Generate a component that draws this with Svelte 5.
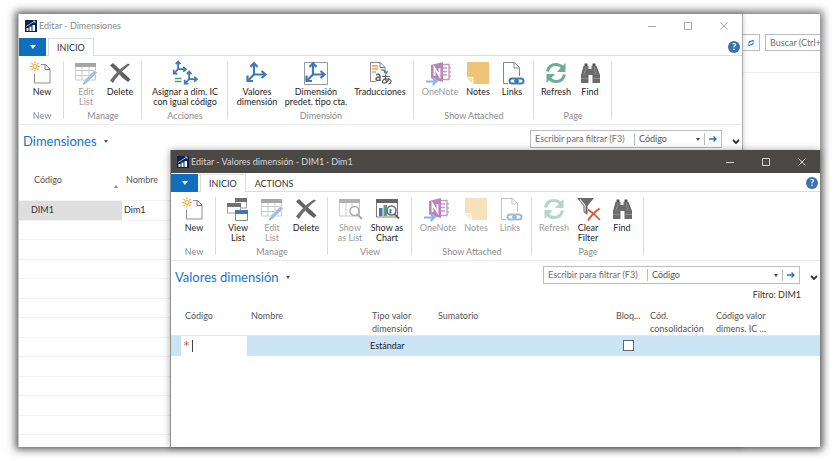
<script>
  const mainGroups = [
    { name: 'New', items: [{ icon: 'new', lines: ['New'] }] },
    { name: 'Manage', items: [{ icon: 'edit', lines: ['Edit', 'List'], off: true }, { icon: 'delete', lines: ['Delete'] }] },
    { name: 'Acciones', items: [{ icon: 'assign', lines: ['Asignar a dim. IC', 'con igual código'], size: 'xxl' }] },
    {
      name: 'Dimensión',
      items: [
        { icon: 'axes', lines: ['Valores', 'dimensión'], size: 'l' },
        { icon: 'axesbox', lines: ['Dimensión', 'predet. tipo cta.'], size: 'xl' },
        { icon: 'translate', lines: ['Traducciones'], size: 'll' }
      ]
    },
    {
      name: 'Show Attached',
      items: [
        { icon: 'onenote', lines: ['OneNote'], size: 'mm', off: true },
        { icon: 'notes', lines: ['Notes'] },
        { icon: 'links', lines: ['Links'] }
      ]
    },
    { name: 'Page', items: [{ icon: 'refresh', lines: ['Refresh'] }, { icon: 'find', lines: ['Find'] }] }
  ];

  const valueGroups = [
    { name: 'New', items: [{ icon: 'new', lines: ['New'] }] },
    {
      name: 'Manage',
      items: [
        { icon: 'view', lines: ['View', 'List'] },
        { icon: 'edit', lines: ['Edit', 'List'], off: true },
        { icon: 'delete', lines: ['Delete'] }
      ]
    },
    {
      name: 'View',
      items: [
        { icon: 'showlist', lines: ['Show', 'as List'], off: true },
        { icon: 'showchart', lines: ['Show as', 'Chart'], size: 'm' }
      ]
    },
    {
      name: 'Show Attached',
      items: [
        { icon: 'onenote', lines: ['OneNote'], size: 'mm', off: true },
        { icon: 'notes', lines: ['Notes'], off: true, faded: true },
        { icon: 'links', lines: ['Links'], off: true, faded: true }
      ]
    },
    {
      name: 'Page',
      items: [
        { icon: 'refresh', lines: ['Refresh'], off: true, faded: true },
        { icon: 'clear', lines: ['Clear', 'Filter'] },
        { icon: 'find', lines: ['Find'] }
      ]
    }
  ];

  const emptyRows = Array.from({ length: 12 });
</script>

{#snippet axes()}
  <path d="M9 3v10.500h10M9 13.500L3 19.500" />
  <path d="M5.500 6L9 2.200L12.500 6M16.500 10L20.500 13.500L16.500 17M2.500 14.500V20H8" />
{/snippet}

{#snippet glyph(kind)}
  <svg class="glyph" viewBox="0 0 24 24" aria-hidden="true">
    {#if kind === 'new'}
      <path d="M11 3.500h4.500l4.500 4.500v14H4.500V13" fill="#fff" stroke="#8e8e8e" />
      <path d="M15 3.500V8.500H20" fill="none" stroke="#777" />
      <g stroke="#e9a93a" stroke-width="1.200" fill="none">
        <circle cx="5" cy="5.500" r="2" />
        <path d="M5 .5v2M5 8.500v2M0 5.500h2M8 5.500h2M1.500 2l1.300 1.300M7.300 7.800L8.600 9M8.600 2L7.300 3.300M1.500 9l1.300-1.200" />
      </g>
    {:else if kind === 'edit'}
      <path d="M1.500 4h20v15h-20zM1.500 9.500h20M1.500 14.500h20M8 4v15M15 4v15" fill="#fff" stroke="#c9c9c9" />
      <path d="M1 2h21v4H1z" fill="#a6a6a6" />
      <path d="M20.500 9l3 2.500L13 22l-4 1.500L10.500 19z" fill="#9fc0e4" stroke="#fff" stroke-width=".6" />
      <path d="M9 23.500l1-2.500 1.500 1.500z" fill="#7f9fc4" />
    {:else if kind === 'delete'}
      <path d="M2 4.500L5 2Q12 9 18 14q3 3 4.500 4.500L20 21Q14 17 10 12 6 8 2 4.500z" fill="#616161" />
      <path d="M20 2.500l2 1Q14 10 10 15q-3 3-5 7L2 19.500Q6 14 11 9q5-4 9-6.500z" fill="#6d6d6d" />
    {:else if kind === 'assign'}
      <g fill="none" stroke="#3f78b5" stroke-width="2.600">
        <g transform="translate(-1 -1) scale(.68)">{@render axes()}</g>
        <g transform="translate(10 9) scale(.68)">{@render axes()}</g>
      </g>
      <path d="M2 17.500h6.500M2 20.500h6.500" stroke="#4d9a7c" stroke-width="1.300" />
    {:else if kind === 'axes'}
      <g fill="none" stroke="#3f78b5" stroke-width="2.200">{@render axes()}</g>
    {:else if kind === 'axesbox'}
      <path d="M.5 1.500h23v22H.5z" fill="#fff" stroke="#9b9b9b" />
      <g fill="none" stroke="#3f78b5" stroke-width="2.200">{@render axes()}</g>
    {:else if kind === 'translate'}
      <path d="M2.500 1.500h10l4.500 5v4M2.500 1.500v19h6" fill="none" stroke="#8d8d8d" />
      <path d="M12 1.500v5h5" fill="none" stroke="#777" />
      <path d="M4 5h6M4 8h6M4 11h4" stroke="#f09a55" stroke-width="1.300" />
      <path d="M13 9q4-1 5 3M16 10.500l2 2 1.500-2.500" fill="none" stroke="#3f78b5" stroke-width="1.200" />
      <path d="M8 14q3-2 4 1v5M12 16q-4 0-4 2t4 1" fill="none" stroke="#5a5a5a" stroke-width="1.400" />
      <path d="M14 15.500h8M17.500 13.500q-.5 5 1 8M21 17q-1 4-4 5-3 .5-2.500-2 1-2.500 5-2 4 .500 3.500 3-.5 1.500-2.500 2" fill="none" stroke="#5a5a5a" stroke-width="1.200" />
    {:else if kind === 'onenote'}
      <path d="M14 3.500h7v15h-7" fill="none" stroke="#c59ac4" stroke-width="1.400" />
      <path d="M15 7h4M15 10.500h4M15 14h4M21 7h2M21 11h2M21 15h2" stroke="#c59ac4" stroke-width="1.500" />
      <path d="M3 4l12-3v20L3 18z" fill="#b985b8" />
      <path d="M6.500 15V7l5 8V7" fill="none" stroke="#fff" stroke-width="1.800" />
      <path d="M-1 17.500h8l2 2v4.500h-10z" fill="#fff" />
      <path d="M-2 20.500H8M4.500 17l4 3.500-4 3.500" fill="none" stroke="#8db4de" stroke-width="2" />
    {:else if kind === 'notes'}
      <path d="M1 1h22v22H7l-6-6z" fill="#eec578" />
      <path d="M1 16.500h6V23" fill="#f8dfae" stroke="#fff" />
    {:else if kind === 'links'}
      <path d="M8 22.500H3.500v-21h11l5 5V15M14 1.500v5.500h5.500" fill="none" stroke="#858585" />
      <g fill="none" stroke="#3f78b5" stroke-width="2">
        <rect x="9.500" y="17.500" width="8" height="5" rx="2.500" />
        <rect x="15.500" y="17.500" width="8" height="5" rx="2.500" />
      </g>
      <path d="M14 20h5" stroke="#3f78b5" stroke-width="1.500" />
    {:else if kind === 'refresh'}
      <path d="M3.500 10.500Q5 3.500 12 3.500q4 0 6.500 3M20.500 13.500Q19 20.500 12 20.500q-4 0-6.500-3" fill="none" stroke="#6faa93" stroke-width="3" />
      <path d="M21.500 2v9h-8.500zM2.500 22v-9h8.500z" fill="#6faa93" />
    {:else if kind === 'find'}
      <path d="M5.500 5h5v3h3V5h5l3.500 9v8h-7.500v-8h-4v8H3v-8z" fill="#6b6b6b" />
      <path d="M6.500 2.500h3V5h-3zM14.500 2.500h3V5h-3z" fill="#555" />
      <path d="M3 17.500h7.500M14.500 17.500H22M8 6l-2 8M16 6l2 8" stroke="#999" stroke-width=".8" />
    {:else if kind === 'view'}
      <path d="M9.500 3h11v8h-11z" fill="#fff" stroke="#a0a0a0" />
      <path d="M9 1h12v4H9z" fill="#707070" />
      <path d="M1.500 8h13v8h-13z" fill="#fff" stroke="#a0a0a0" />
      <path d="M1 6h14v4H1z" fill="#707070" />
      <path d="M9.500 15h12v8.500h-12z" fill="#fff" stroke="#8a8a8a" />
      <path d="M9 13h13v4H9z" fill="#3f78b5" />
    {:else if kind === 'showlist'}
      <path d="M1.500 3h20v16h-20zM8 3v16M14 3v16" fill="#fff" stroke="#c9c9c9" />
      <path d="M1 2h21v4H1z" fill="#b0b0b0" />
      <circle cx="16.500" cy="14" r="4.500" fill="#fff" stroke="#aaa" stroke-width="1.500" />
      <path d="M19.500 17.500L24 22" stroke="#aaa" stroke-width="2" />
    {:else if kind === 'showchart'}
      <path d="M1.500 3h21v17h-21z" fill="#fff" stroke="#7a7a7a" />
      <path d="M1 2h22v4H1z" fill="#646464" />
      <path d="M4 11h3.500v8H4z" fill="#3f78b5" />
      <path d="M8.500 8H12v11H8.500z" fill="#58a186" />
      <circle cx="16.500" cy="13.500" r="4.500" fill="#fff" stroke="#666" stroke-width="1.500" />
      <path d="M14.500 12h2v4.500h-2z" fill="#3f78b5" />
      <path d="M19.500 17L24 21.500" stroke="#666" stroke-width="2" />
    {:else if kind === 'clear'}
      <path d="M1 1h17l-6.500 8v9l-4-3V9z" fill="#6b6b6b" />
      <path d="M4 2.500l5 6v6" fill="none" stroke="#ddd" stroke-width="1.200" />
      <path d="M12 12.500q6 4 12 10.500M23.500 11.500Q16 17 12 23.500" fill="none" stroke="#dc5430" stroke-width="1.800" />
    {/if}
  </svg>
{/snippet}

{#snippet titlebar(text)}
  <header class="titlebar">
    <svg class="logo" viewBox="0 0 12 12" aria-hidden="true">
      <path d="M0 0h12v12H0z" fill="#0c2350" />
      <path d="M1.500 8h2v3h-2zM4.500 6.500h2V11h-2zM7.500 5h2.500v6H7.500z" fill="#fff" />
      <path d="M1 6.500L5 4l5-3M8 1h2v2" fill="none" stroke="#c8d4e6" stroke-width=".8" />
    </svg>
    <h1>{text}</h1>
    <div class="winbuttons">
      <button aria-label="Minimizar"><svg viewBox="0 0 10 10"><path d="M1 5.500h8" /></svg></button>
      <button aria-label="Maximizar"><svg viewBox="0 0 10 10"><path d="M1.500 1.500h7v7h-7z" /></svg></button>
      <button aria-label="Cerrar"><svg viewBox="0 0 10 10"><path d="M1.500 1.500l7 7M8.500 1.500l-7 7" /></svg></button>
    </div>
  </header>
{/snippet}

{#snippet tabs(names)}
  <nav class="tabs">
    <button class="menu" aria-label="Menú"><svg viewBox="0 0 6 4"><path d="M0 0h6L3 4z" fill="#fff" /></svg></button>
    {#each names as name, i}
      <button class="tab" class:active={i === 0}>{name}</button>
    {/each}
    <button class="help" aria-label="Ayuda">?</button>
  </nav>
{/snippet}

{#snippet ribbon(groups)}
  <div class="ribbon">
    {#each groups as group}
      <section class="group">
        <div class="items">
          {#each group.items as item}
            <button class="item {item.size ?? 's'}" class:off={item.off} class:faded={item.faded}>
              {@render glyph(item.icon)}
              {#each item.lines as line}<span>{line}</span>{/each}
            </button>
          {/each}
        </div>
        <h3>{group.name}</h3>
      </section>
    {/each}
  </div>
{/snippet}

{#snippet pagehead(title, id)}
  <div class="pagehead">
    <h2>{title}<svg class="tiny" viewBox="0 0 4 3"><path d="M0 0h4L2 3z" fill="#555" /></svg></h2>
    <div class="filter">
      <input type="text" aria-label="Filtrar" placeholder="Escribir para filtrar (F3)" />
      <label for={id} class="pick">
        <select {id} aria-label="Campo"><option>Código</option></select>
        <svg class="tiny" viewBox="0 0 4 3"><path d="M0 0h4L2 3z" fill="#444" /></svg>
      </label>
      <button class="go" aria-label="Aplicar">
        <svg viewBox="0 0 8 8"><path d="M0 4h7M4.500 1.500L7 4 4.500 6.500" fill="none" stroke="#2a6fc0" stroke-width="1.300" /></svg>
      </button>
    </div>
    <button class="expand" aria-label="Expandir">
      <svg viewBox="0 0 8 6"><path d="M1 1l3 3 3-3" fill="none" stroke="#333" stroke-width="1.800" /></svg>
    </button>
  </div>
{/snippet}

<main class="desktop">
  <div class="backdrop">
    <div class="searchbar">
      <button class="reload" aria-label="Actualizar">
        <svg viewBox="0 0 8 8"><path d="M1 4.500Q1.500 1.500 5 1.500M7 3.500Q6.500 6.500 3 6.500" fill="none" stroke="#2a6fc0" stroke-width="1.400" /><path d="M4.500 0H7.500v3.500zM3.500 8H.5V4.500z" fill="#2a6fc0" /></svg>
      </button>
      <input type="text" aria-label="Buscar" placeholder="Buscar (Ctrl+" />
    </div>
  </div>

  <article class="window main">
    {@render titlebar('Editar - Dimensiones')}
    {@render tabs(['INICIO'])}
    {@render ribbon(mainGroups)}
    {@render pagehead('Dimensiones', 'field-main')}
    <table class="list">
      <colgroup><col class="code" /><col /></colgroup>
      <thead>
        <tr>
          <th>Código<svg class="sort" viewBox="0 0 4 3"><path d="M0 3h4L2 0z" fill="#888" /></svg></th>
          <th>Nombre</th>
        </tr>
      </thead>
      <tbody>
        <tr><td class="selected">DIM1</td><td>Dim1</td></tr>
        {#each emptyRows as _}
          <tr><td></td><td></td></tr>
        {/each}
      </tbody>
    </table>
  </article>

  <article class="window values">
    {@render titlebar('Editar - Valores dimensión - DIM1 · Dim1')}
    {@render tabs(['INICIO', 'ACTIONS'])}
    {@render ribbon(valueGroups)}
    {@render pagehead('Valores dimensión', 'field-values')}
    <p class="applied">Filtro: DIM1</p>
    <table class="grid">
      <colgroup>
        <col class="mark" /><col class="short" /><col class="name" /><col class="short" />
        <col class="sum" /><col class="tick" /><col class="short" /><col />
      </colgroup>
      <thead>
        <tr>
          <td></td>
          <th>Código</th>
          <th>Nombre</th>
          <th>Tipo valor<br />dimensión</th>
          <th>Sumatorio</th>
          <th>Bloq...</th>
          <th>Cód.<br />consolidación</th>
          <th>Código valor<br />dimens. IC ...</th>
        </tr>
      </thead>
      <tbody>
        <tr>
          <td></td>
          <td class="editing"><div><span class="star">*</span><input type="text" aria-label="Código" /></div></td>
          <td></td>
          <td>Estándar</td>
          <td></td>
          <td class="check"><input type="checkbox" aria-label="Bloqueado" /></td>
          <td></td>
          <td></td>
        </tr>
      </tbody>
    </table>
  </article>
</main>

<style>
  :global(body) {
    background: #fff;
  }
  :global(#app) {
    overflow: hidden;
  }
  .desktop {
    position: relative;
    height: calc(100vh - 28px);
    margin: 14px 18px;
    background: #fff;
    font: 9px/10px Lato, 'Open Sans', sans-serif;
    color: #333;
    box-shadow: 0 0 8px 3px rgba(0, 0, 0, 0.55);
  }
  h1, h2, h3, p {
    margin: 0;
    font-weight: 400;
  }
  button, input, select {
    margin: 0;
    padding: 0;
    border: 0;
    border-radius: 0;
    background: none;
    font: inherit;
    color: inherit;
    outline: 0;
  }
  svg {
    display: block;
    flex: none;
  }
  ::placeholder {
    color: #6e6e6e;
    opacity: 1;
  }

  .backdrop {
    height: 58px;
    border-bottom: 1px solid #eee;
  }
  .searchbar {
    display: flex;
    justify-content: flex-end;
    gap: 5px;
    padding-top: 20px;
  }
  .reload {
    display: flex;
    align-items: center;
    justify-content: center;
    width: 18px;
    height: 17px;
    border: 1px solid #bbb;
  }
  .reload svg {
    width: 6px;
    height: 6px;
  }
  .searchbar input {
    box-sizing: border-box;
    width: 55px;
    padding-left: 4px;
    border: 1px solid #bbb;
    border-right: 0;
  }

  .window {
    position: absolute;
    display: flex;
    flex-direction: column;
    bottom: 0;
    background: #fff;
    overflow: clip;
  }
  .window > :global(*) {
    flex-shrink: 0;
  }
  .main {
    top: 0;
    left: 0;
    right: 77px;
    border-left: 1px solid #c4c4c4;
    border-right: 1px solid #aaa;
    box-shadow: 0 0 6px rgba(0, 0, 0, 0.2);
  }
  .values {
    top: 136px;
    left: 152px;
    right: 0;
    border-left: 1px solid #8f8f8f;
    box-shadow: 0 0 7px rgba(0, 0, 0, 0.35);
  }

  .titlebar {
    display: flex;
    align-items: center;
    gap: 2px;
    height: 24px;
    padding: 0 0 0 6px;
    color: #8a8a8a;
  }
  .values .titlebar {
    height: 23px;
    margin-bottom: 1px;
    background: #4a4946;
    color: #d6d6d6;
  }
  .logo {
    width: 12px;
    height: 12px;
  }
  h1 {
    flex: 1;
    font-size: 9px;
    white-space: nowrap;
  }
  .winbuttons {
    display: flex;
  }
  .main .winbuttons {
    color: #a6a6a6;
  }
  .winbuttons button {
    display: flex;
    justify-content: center;
    width: 36px;
  }
  .winbuttons svg {
    width: 10px;
    height: 10px;
    fill: none;
    stroke: currentColor;
  }

  .tabs {
    display: flex;
    box-sizing: border-box;
    height: 18px;
    border-bottom: 1px solid #dcdcdc;
  }
  .menu {
    display: flex;
    align-items: center;
    justify-content: center;
    width: 27px;
    height: 18px;
    margin-right: 2px;
    background: #106ebe;
  }
  .menu svg {
    width: 6px;
    height: 4px;
  }
  .tab {
    box-sizing: border-box;
    height: 18px;
    padding: 0 8px;
    border: 1px solid transparent;
    border-bottom: 0;
  }
  .tab.active {
    border-color: #dcdcdc;
    background: #fff;
  }
  .help {
    width: 12px;
    height: 12px;
    margin: 3px 2px 0 auto;
    border-radius: 6px;
    background: #3a72b0;
    color: #fff;
    font-weight: 700;
  }

  .ribbon {
    display: flex;
    padding: 5px 0 5px 1px;
    border-bottom: 1px solid #ececec;
  }
  .group {
    display: flex;
    flex-direction: column;
    justify-content: space-between;
    box-sizing: border-box;
    height: 58px;
    padding: 0 4px 0 5px;
    border-right: 1px solid #dedede;
  }
  .items {
    display: flex;
    align-items: flex-start;
  }
  h3 {
    font-size: 9px;
    line-height: 6px;
    text-align: center;
    color: #8c8c8c;
  }
  .item {
    display: flex;
    flex-direction: column;
    align-items: center;
    color: #1e1e1e;
    white-space: nowrap;
  }
  .glyph {
    width: 24px;
    height: 24px;
    margin-bottom: 2px;
    overflow: visible;
  }
  .s { width: 34px; }
  .m { width: 40px; }
  .mm { width: 42px; }
  .l { width: 48px; }
  .ll { width: 58px; }
  .xl { width: 70px; }
  .xxl { width: 76px; }
  .off {
    color: #9c9c9c;
  }
  .faded .glyph {
    opacity: 0.5;
  }

  .pagehead {
    display: flex;
    align-items: flex-start;
    padding: 5px 2px 0 4px;
  }
  h2 {
    display: flex;
    flex: 1;
    align-items: center;
    gap: 7px;
    font-size: 13px;
    line-height: 22px;
    color: #1a73c7;
  }
  .tiny {
    width: 4px;
    height: 3px;
  }
  .filter {
    display: flex;
    box-sizing: border-box;
    height: 18px;
    margin-right: 10px;
    border: 1px solid #bdbdbd;
  }
  .filter input {
    width: 99px;
    padding-left: 4px;
  }
  .pick {
    display: flex;
    align-items: center;
    width: 61px;
    margin: 2px 0;
    padding: 0 4px;
    border-left: 1px solid #bdbdbd;
    border-right: 1px solid #bdbdbd;
  }
  .values .pick {
    width: 126px;
  }
  .pick select {
    flex: 1;
    min-width: 0;
    appearance: none;
    color: #555;
  }
  .go {
    display: flex;
    align-items: center;
    justify-content: center;
    width: 16px;
  }
  .go svg {
    width: 8px;
    height: 8px;
  }
  .expand {
    margin-top: 9px;
  }
  .expand svg {
    width: 8px;
    height: 6px;
  }

  table {
    width: 100%;
    table-layout: fixed;
    border-collapse: collapse;
  }
  th, td {
    box-sizing: border-box;
    padding: 0 0 0 2px;
    font-weight: 400;
    text-align: left;
    white-space: nowrap;
  }
  th {
    padding-left: 4px;
    color: #555;
  }
  .list {
    margin-top: 20px;
  }
  .list .code {
    width: 103px;
  }
  .list th {
    position: relative;
    height: 28px;
    padding-bottom: 12px;
  }
  .list tr > :first-child {
    padding-left: 15px;
  }
  .list tbody td {
    height: 19px;
    border-top: 1px solid #f3f3f3;
  }
  .list tbody tr:nth-child(odd) td {
    height: 20px;
  }
  .list tbody td:first-child {
    padding-left: 12px;
  }
  .list .selected {
    background: #dedede;
  }
  .sort {
    position: absolute;
    right: 4px;
    bottom: 12px;
    width: 4px;
    height: 3px;
  }

  .applied {
    padding: 2px 19px 0 0;
    text-align: right;
  }
  .grid {
    margin-top: 9px;
  }
  .mark { width: 10px; }
  .short { width: 66px; }
  .name { width: 121px; }
  .sum { width: 178px; }
  .tick { width: 34px; }
  .grid th {
    line-height: 13px;
    vertical-align: top;
  }
  .grid tbody td {
    height: 20px;
    border-top: 1px solid #dfe9f1;
    background: #cbe4f6;
    color: #222;
  }
  .grid tbody .editing {
    background: #fff;
  }
  .editing div {
    display: flex;
    align-items: center;
    gap: 2px;
    height: 15px;
  }
  .star {
    font-size: 16px;
    line-height: 20px;
    color: #e0562f;
  }
  .editing input {
    width: 44px;
    height: 12px;
    border-left: 1px solid #444;
  }
  .grid .check {
    padding-left: 11px;
  }
  .check input {
    display: block;
    appearance: none;
    width: 11px;
    height: 11px;
    border: 1px solid #666;
    background: #fff;
  }
</style>
